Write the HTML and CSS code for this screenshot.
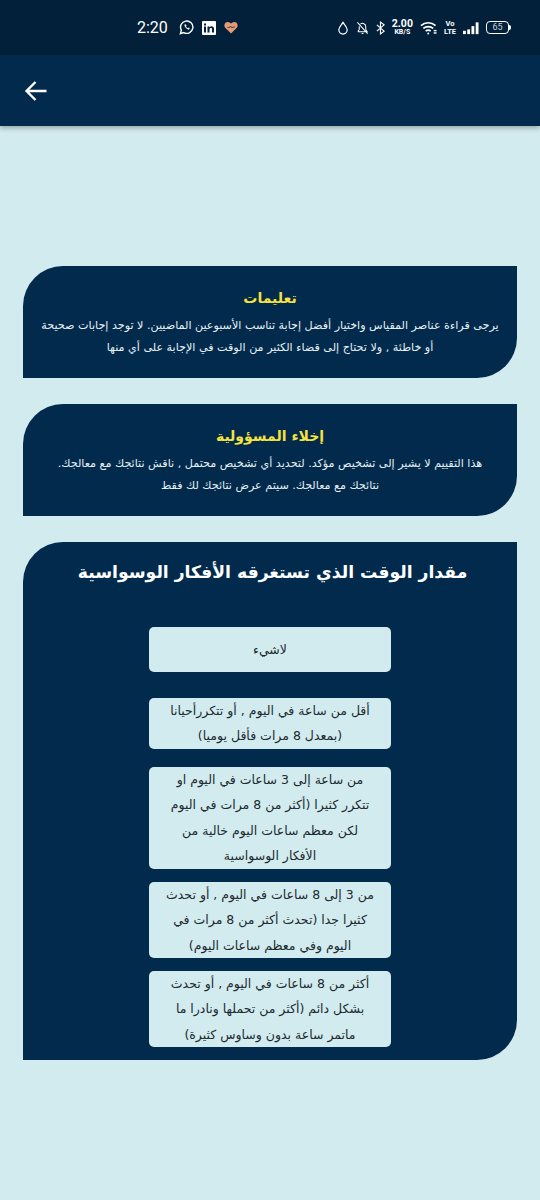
FILE: index.html
```html
<!DOCTYPE html>
<html lang="ar">
<head>
  <meta charset="UTF-8">
  <meta name="viewport" content="width=device-width, initial-scale=1.0">
  <title>مقدار الوقت</title>
  <link rel="stylesheet" href="styles.css">
</head>
<body>

  <!-- status bar -->
  <div class="status-bar">
    <div class="status-left">
      <span class="time">2:20</span>
      <svg width="15" height="15" viewBox="0 0 16 16" fill="none" stroke="#fff" stroke-width="1.5"><path d="M1.5 14.5l1-3.6A6.6 6.6 0 1 1 5 13.4z"/><path d="M5.6 5c.6 2.800 2.400 4.700 5 5.400l.9-1.400-1.600-.9-.7.6c-.8-.4-1.400-1-1.800-1.800l.6-.7-.8-1.600z" fill="#fff" stroke="none"/></svg>
      <svg width="14" height="14" viewBox="0 0 14 14"><rect width="14" height="14" rx="1" fill="#fff"/><rect x="2" y="5.500" width="2" height="6" fill="#02203a"/><rect x="2" y="2.500" width="2" height="2" fill="#02203a"/><path d="M5.500 5.500h2v1c.5-.8 1.200-1.200 2-1.200 1.500 0 2.500 1 2.500 2.800v3.400h-2V8.400c0-.8-.3-1.300-1-1.300s-1.500.5-1.500 1.400v3h-2z" fill="#02203a"/></svg>
      <svg width="14" height="13" viewBox="0 0 14 13"><path d="M7 12.500L1.200 6.800C-.6 4.800.6 1 3.700 1 5.200 1 6.300 1.800 7 2.800 7.700 1.800 8.800 1 10.300 1c3.100 0 4.300 3.800 2.500 5.800z" fill="#e39b78"/><path d="M3.500 6.500h2l1-1.500 1.500 2 1-1h2" fill="none" stroke="#5a3a30" stroke-width="1"/></svg>
    </div>
    <div class="status-right">
      <svg width="12" height="14" viewBox="0 0 12 15" fill="none" stroke="#fff" stroke-width="1.300"><path d="M6 1.500C4.500 4 1.500 6.500 1.500 9.500a4.500 4.500 0 0 0 9 0C10.500 6.500 7.500 4 6 1.500z"/></svg>
      <svg width="13" height="14" viewBox="0 0 14 15" fill="none" stroke="#fff" stroke-width="1.100"><path d="M2 11.500h10L10.500 9V6A3.500 3.500 0 0 0 4.800 3.300M3.500 5.500V9L2 11.500M6 13.500h2M1.500 1.500l11 12"/></svg>
      <svg width="9" height="14" viewBox="0 0 10 15" fill="none" stroke="#fff" stroke-width="1.300"><path d="M1 4l8 7-4 3V1l4 3-8 7"/></svg>
      <div class="speed"><span class="speed-num">2.00</span><span class="speed-unit">KB/S</span></div>
      <svg width="17" height="14" viewBox="0 0 18 14" fill="none" stroke="#fff" stroke-width="1.700"><path d="M1 4.500c4.500-4 11-4 15.500 0M3.500 7.500c3-2.600 7.500-2.600 10.500 0M6 10.300c1.600-1.300 3.700-1.300 5.300 0"/><circle cx="8.700" cy="12.800" r="1" fill="#fff" stroke="none"/><rect x="14.500" y="9" width="3" height="1.500" fill="#fff" stroke="none"/><rect x="14.500" y="11.500" width="3" height="1.500" fill="#fff" stroke="none"/></svg>
      <div class="volte"><span>Vo</span><span>LTE</span></div>
      <svg width="16" height="14" viewBox="0 0 17 14" fill="#fff"><rect x="0" y="10" width="3" height="3.500"/><rect x="4.500" y="8.500" width="3" height="5"/><rect x="9" y="5" width="3" height="8.500"/><rect x="13.500" y="1" width="3" height="12.500"/></svg>
      <div class="battery"><span class="battery-body">65</span><span class="battery-tip"></span></div>
    </div>
  </div>

  <!-- app bar -->
  <div class="app-bar">
    <svg class="back" width="24" height="24" viewBox="0 0 24 24" fill="none" stroke="#fff" stroke-width="2.400"><path d="M22.500 12H2.500M11.500 3l-9 9 9 9"/></svg>
  </div>

  <main class="content" dir="rtl">
    <section class="card info-card">
      <h2 class="info-title">تعليمات</h2>
      <p class="info-text">يرجى قراءة عناصر المقياس واختيار أفضل إجابة تناسب الأسبوعين الماضيين. لا توجد إجابات صحيحة<br>أو خاطئة , ولا تحتاج إلى قضاء الكثير من الوقت في الإجابة على أي منها</p>
    </section>

    <section class="card info-card">
      <h2 class="info-title">إخلاء المسؤولية</h2>
      <p class="info-text">هذا التقييم لا يشير إلى تشخيص مؤكد. لتحديد أي تشخيص محتمل , ناقش نتائجك مع معالجك.<br>نتائجك مع معالجك. سيتم عرض نتائجك لك فقط</p>
    </section>

    <section class="card question-card">
      <h1 class="question-title">مقدار الوقت الذي تستغرقه الأفكار الوسواسية</h1>
      <div class="answers">
        <button type="button" class="answer answer-none">لاشيء</button>
        <button type="button" class="answer answer-two">أقل من ساعة في اليوم , أو تتكررأحيانا<br>(بمعدل 8 مرات فأقل يوميا)</button>
        <button type="button" class="answer answer-four">من ساعة إلى 3 ساعات في اليوم او<br>تتكرر كثيرا (أكثر من 8 مرات في اليوم<br>لكن معظم ساعات اليوم خالية من<br>الأفكار الوسواسية</button>
        <button type="button" class="answer answer-three">من 3 إلى 8 ساعات في اليوم , أو تحدث<br>كثيرا جدا (تحدث أكثر من 8 مرات في<br>اليوم وفي معظم ساعات اليوم)</button>
        <button type="button" class="answer answer-three">أكثر من 8 ساعات في اليوم , أو تحدث<br>بشكل دائم (أكثر من تحملها ونادرا ما<br>ماتمر ساعة بدون وساوس كثيرة)</button>
      </div>
    </section>
  </main>

</body>
</html>
```

FILE: styles.css
```css
* {
  box-sizing: border-box;
}

body {
  margin: 0;
  min-height: 1200px;
  background-color: #d2ebee;
  font-family: "DejaVu Sans", sans-serif;
}

.status-bar {
  height: 55px;
  background: #02203a;
  display: flex;
  align-items: center;
  justify-content: space-between;
  padding: 0 29px 0 137px;
  color: #fff;
}

.status-left,
.status-right {
  display: flex;
  align-items: center;
}

.status-left {
  gap: 8px;
}

.status-right {
  gap: 7px;
}

.time {
  font-family: Roboto, sans-serif;
  font-size: 16px;
  margin-right: 3px;
}

.speed {
  display: flex;
  flex-direction: column;
  align-items: center;
  font-family: Roboto, sans-serif;
  font-weight: 700;
  line-height: 9px;
}

.speed-num {
  font-size: 10.5px;
}

.speed-unit {
  font-size: 7px;
}

.volte {
  display: flex;
  flex-direction: column;
  align-items: center;
  font-family: Roboto, sans-serif;
  font-size: 7.5px;
  font-weight: 700;
  line-height: 8px;
}

.battery {
  display: flex;
  align-items: center;
}

.battery-body {
  width: 23px;
  height: 13px;
  border: 1px solid #fff;
  border-radius: 4px;
  font-family: Roboto, sans-serif;
  font-size: 9px;
  line-height: 11px;
  text-align: center;
  color: #c9d3da;
}

.battery-tip {
  width: 2px;
  height: 5px;
  background: #fff;
  border-radius: 0 2px 2px 0;
}

.app-bar {
  height: 71px;
  background: #012a4d;
  box-shadow: 0 2px 5px rgba(0, 0, 0, 0.3);
  display: flex;
  align-items: center;
  padding-left: 24px;
}

.content {
  padding: 140px 23px 0;
  display: flex;
  flex-direction: column;
  gap: 26px;
}

.card {
  background: #012a4d;
  border-radius: 40px 0 40px 0;
  text-align: center;
}

.info-card {
  height: 112px;
  padding-top: 22px;
}

.info-title {
  margin: 0;
  font-size: 14px;
  line-height: 21px;
  font-weight: 700;
  color: #f6e33f;
}

.info-text {
  margin: 6px 0 0;
  font-size: 11.15px;
  line-height: 22px;
  color: #e8f1f3;
}

.question-card {
  height: 518px;
  padding-top: 17px;
}

.question-title {
  margin: 0;
  padding-left: 5px;
  font-size: 17.2px;
  line-height: 27px;
  font-weight: 700;
  color: #fff;
}

.answers {
  display: flex;
  flex-direction: column;
  align-items: center;
  gap: 13px;
  margin-top: 41px;
}

.answer {
  width: 242px;
  padding: 0 0 4px;
  border: none;
  border-radius: 5px;
  background: #d2ebee;
  color: #1c2a30;
  font-family: "DejaVu Sans", sans-serif;
  font-size: 12.5px;
  line-height: 25.4px;
}

.answer-none {
  height: 45px;
  margin-bottom: 13px;
  padding: 0;
}

.answer-two {
  height: 51px;
  margin-bottom: 5px;
}

.answer-four {
  height: 102px;
}

.answer-three {
  height: 76px;
}
```
